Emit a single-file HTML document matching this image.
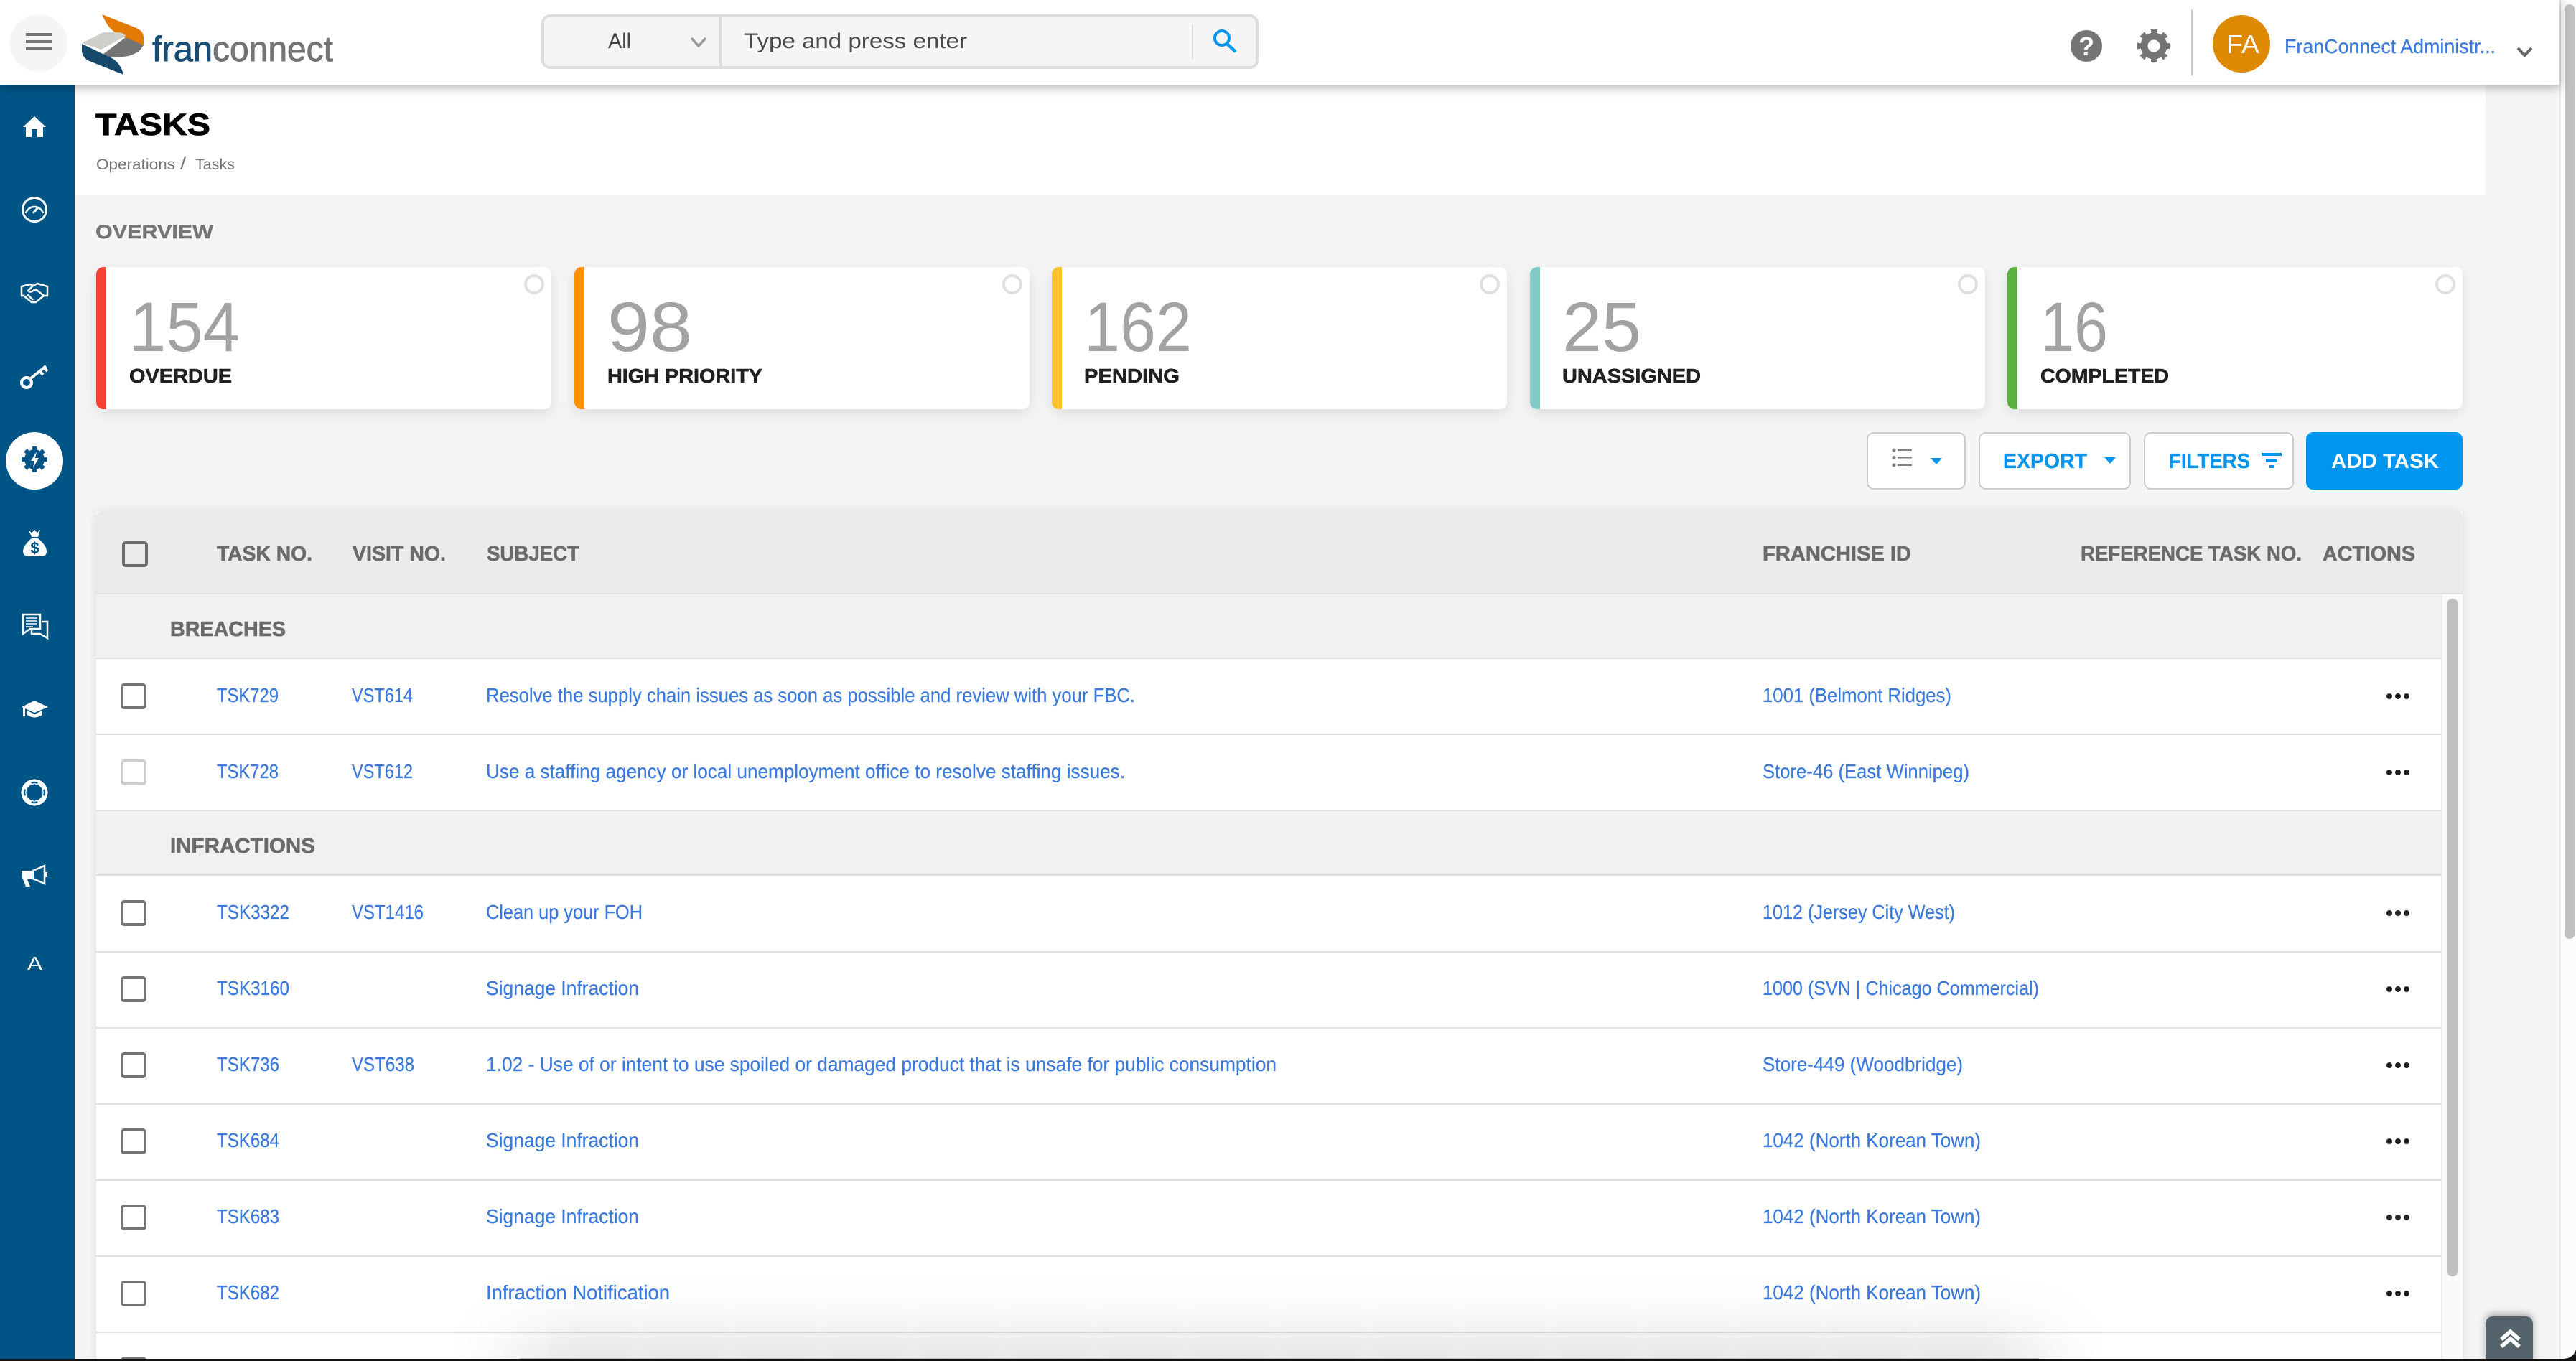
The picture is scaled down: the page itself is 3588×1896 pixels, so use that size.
<!DOCTYPE html>
<html lang="en">
<head>
<meta charset="utf-8">
<title>Tasks - FranConnect</title>
<style>
html,body{margin:0;padding:0;width:3588px;height:1896px;overflow:hidden;background:#f5f5f5;font-family:"Liberation Sans",sans-serif}
#page{position:relative;width:3588px;height:1896px;overflow:hidden;background:#f5f5f5}
.b{position:absolute;box-sizing:border-box}
svg{position:absolute;left:0;top:0}
text{font-family:"Liberation Sans",sans-serif}
.h{font-weight:700;font-size:29px;fill:#6b6b6b;stroke:#6b6b6b;stroke-width:.6px}
.l{font-size:27.500px;fill:#3b7adc;stroke:#3b7adc;stroke-width:.25px}
.n{font-size:97px;fill:#a2a2a2}
.c{font-weight:700;font-size:28px;fill:#212121;stroke:#212121;stroke-width:.6px}
.t{font-weight:700;font-size:29px;fill:#0096f0;stroke:#0096f0;stroke-width:.3px}
.card{top:372px;width:634px;height:198px;background:#fff;border-radius:10px;box-shadow:0 6px 20px rgba(0,0,0,.1);overflow:hidden}
.card i{position:absolute;left:0;top:0;bottom:0;width:14px}
.card u{position:absolute;right:10px;top:10px;width:28px;height:28px;box-sizing:border-box;border:4px solid #e0e0e0;border-radius:50%}
.btn{top:602px;height:80px;background:#fff;border:2px solid #ccc;border-radius:10px}
.line{left:134px;width:3266px;height:2px;background:#e0e0e0}
.sec{left:134px;width:3266px;height:88px;background:#f1f1f1}
</style>
</head>
<body>
<div id="page">
<!-- title band -->
<div class="b" style="left:104px;top:118px;width:3358px;height:154px;background:#fff"></div>

<!-- cards -->
<div class="b card" style="left:134px"><i style="background:#f44336"></i><u></u></div>
<div class="b card" style="left:800px"><i style="background:#ff9100"></i><u></u></div>
<div class="b card" style="left:1465px"><i style="background:#fbc02d"></i><u></u></div>
<div class="b card" style="left:2131px"><i style="background:#80cbc4"></i><u></u></div>
<div class="b card" style="left:2796px"><i style="background:#5cb03f"></i><u></u></div>

<!-- toolbar buttons -->
<div class="b btn" style="left:2600px;width:138px"></div>
<div class="b btn" style="left:2756px;width:212px"></div>
<div class="b btn" style="left:2986px;width:209px"></div>
<div class="b btn" style="left:3212px;width:218px;background:#0096f0;border-color:#0096f0"></div>

<!-- table -->
<div class="b" style="left:134px;top:713px;width:3296px;height:1183px;background:#fff;box-shadow:0 0 14px rgba(0,0,0,.1)"></div>
<div class="b" style="left:134px;top:713px;width:3296px;height:113px;background:#ebebeb;border-radius:6px 6px 0 0"></div>
<div class="b" style="left:134px;top:826px;width:3296px;height:2px;background:#e0e0e0"></div>
<div class="b sec" style="top:828px"></div>
<div class="b line" style="top:916px"></div>
<div class="b line" style="top:1022px"></div>
<div class="b line" style="top:1128px"></div>
<div class="b sec" style="top:1130px"></div>
<div class="b line" style="top:1218px"></div>
<div class="b line" style="top:1325px"></div>
<div class="b line" style="top:1431px"></div>
<div class="b line" style="top:1537px"></div>
<div class="b line" style="top:1643px"></div>
<div class="b line" style="top:1749px"></div>
<div class="b line" style="top:1855px"></div>
<div class="b" style="left:3400px;top:828px;width:28px;height:1068px;background:#fafafa;border-left:2px solid #eee"></div>
<div class="b" style="left:3408px;top:834px;width:16px;height:944px;background:#c0c0c0;border-radius:8px"></div>

<!-- page scrollbar -->
<div class="b" style="left:3565px;top:0;width:23px;height:1896px;background:#fbfbfb;border-left:2px solid #e8e8e8"></div>
<div class="b" style="left:3572px;top:6px;width:14px;height:1302px;background:#c0c0c0;border-radius:7px"></div>

<!-- sidebar -->
<div class="b" style="left:0;top:118px;width:104px;height:1778px;background:#005587"></div>
<div class="b" style="left:8px;top:602px;width:80px;height:80px;background:#fff;border-radius:50%"></div>

<!-- header -->
<div class="b" style="left:0;top:0;width:3565px;height:118px;background:#fff;box-shadow:0 4px 14px rgba(0,0,0,.3)"></div>
<div class="b" style="left:14px;top:20px;width:80px;height:80px;background:#f5f5f5;border-radius:50%"></div>
<div class="b" style="left:754px;top:20px;width:999px;height:76px;background:#f5f5f5;border:4px solid #ddd;border-radius:12px"></div>
<div class="b" style="left:1002px;top:24px;width:4px;height:68px;background:#ddd"></div>
<div class="b" style="left:1660px;top:34px;width:2px;height:48px;background:#ddd"></div>
<div class="b" style="left:3082px;top:21px;width:80px;height:80px;background:#dd8a00;border-radius:50%"></div>
<div class="b" style="left:3052px;top:13px;width:2px;height:92px;background:#ccc"></div>

<svg width="3588" height="1896" viewBox="0 0 3588 1896" xmlns="http://www.w3.org/2000/svg">
<!-- hamburger -->
<g fill="#757575"><rect x="36" y="46" width="36" height="4"/><rect x="36" y="56" width="36" height="4"/><rect x="36" y="66" width="36" height="4"/></g>

<!-- logo -->
<path d="M142 20 L190 39 L195 42 Q200 46 200 52 V63 L171 51 Q155 44 148 32 Z" fill="#e27900"/>
<path d="M114 60 L140 47 Q143 45 147 45 H164 Q172 45 175 50 L141 69 Z" fill="#cfcfcb"/>
<path d="M175 52 L200 63 L194 71 Q182 79 170 79 H152 Q146 79 144 75 Z" fill="#757575"/>
<path d="M114 61 L143 75 L156 81 Q168 88 172 104 L122 84 Q114 78 114 70 Z" fill="#15496b"/>
<text x="212" y="85" font-size="49" fill="#1a4d73" stroke="#1a4d73" stroke-width=".9" textLength="84" lengthAdjust="spacingAndGlyphs">fran</text>
<text x="296" y="85" font-size="49" fill="#757575" stroke="#757575" stroke-width=".9" textLength="168" lengthAdjust="spacingAndGlyphs">connect</text>

<!-- search -->
<text x="847" y="67" font-size="30" fill="#444" textLength="32" lengthAdjust="spacingAndGlyphs">All</text>
<path d="M963 53 L973 64 L983 53" fill="none" stroke="#999" stroke-width="3.5"/>
<text x="1036" y="67" font-size="30" fill="#4a4a4a" textLength="311" lengthAdjust="spacingAndGlyphs">Type and press enter</text>
<circle cx="1702" cy="53" r="10" fill="none" stroke="#0096f0" stroke-width="4"/>
<path d="M1709 61 L1721 72" stroke="#0096f0" stroke-width="4.500" fill="none"/>

<!-- help -->
<circle cx="2906" cy="64" r="22" fill="#757575"/>
<text x="2906" y="77" font-size="36" font-weight="700" fill="#fff" text-anchor="middle">?</text>
<!-- header gear -->
<circle cx="3000" cy="64" r="13.500" fill="none" stroke="#757575" stroke-width="10"/>
<circle cx="3000" cy="64" r="20" fill="none" stroke="#757575" stroke-width="6.500" stroke-dasharray="7.85 7.85" stroke-dashoffset="3.93"/>

<text x="3101" y="74" font-size="36" fill="#fff" textLength="46" lengthAdjust="spacingAndGlyphs">FA</text>
<text x="3182" y="74" class="l" textLength="294" lengthAdjust="spacingAndGlyphs">FranConnect Administr...</text>
<path d="M3507 67 L3516.500 77 L3526 67" fill="none" stroke="#666" stroke-width="4"/>

<!-- sidebar icons -->
<path d="M48 162 L64 177 H60 V191 H52 V180 H44 V191 H36 V177 H32 Z" fill="#fff"/>
<g fill="none" stroke="#fff" stroke-width="3">
<circle cx="48" cy="292" r="16.500"/>
<path d="M36 297 A12.500 12.500 0 0 1 60 297" stroke-width="2.500"/>
<path d="M46 297 L53 289"/>
</g>
<g fill="none" stroke="#fff" stroke-width="2.500" stroke-linejoin="round">
<path d="M30 399 L42 396 L46 398 L52 395 L66 399 V412 H61 L50 421 H44 L33 412 H30 Z"/>
<path d="M46 398 L39 405 Q42 408 46 405 L50 403 L61 412"/>
<path d="M38 410 L46 418"/>
</g>
<g fill="none" stroke="#fff" stroke-width="4">
<circle cx="37" cy="533" r="7"/>
<path d="M43 527 L64 510"/>
<path d="M55 517 L60 522 M61 512 L66 517"/>
</g>
<circle cx="48" cy="640" r="14" fill="#005587"/>
<circle cx="48" cy="640" r="15.500" fill="none" stroke="#005587" stroke-width="5" stroke-dasharray="6.09 6.09" stroke-dashoffset="3.04"/>
<path d="M51 629 L43 642 H48 L46 652 L54 638 H49 Z" fill="#fff"/>
<path d="M44 750 Q32 760 32 768 Q32 775 40 775 H57 Q65 775 65 768 Q65 760 53 750 Z" fill="#fff"/>
<path d="M40 739 L44 742 L48 739 L52 742 L56 738 L53 748 H44 Z" fill="#fff"/>
<text x="48.500" y="771" font-size="22" font-weight="700" fill="#005587" text-anchor="middle">$</text>
<g fill="none" stroke="#fff" stroke-width="2.500">
<path d="M32 856 H56 V876 H42 L32 883 Z"/>
<path d="M58 866 H66 V889 L56 883 H44 V878"/>
<path d="M36 861 H52 M36 865 H52 M36 869 H52 M36 873 H46" stroke-width="1.600"/>
</g>
<path d="M30 985 L48 976 L67 985 L48 993 Z" fill="#fff"/>
<path d="M38 990 L48 995 L59 990 V996 Q48 1003 38 996 Z" fill="#fff"/>
<path d="M33.500 986 V998" stroke="#fff" stroke-width="3"/>
<circle cx="48" cy="1104" r="15" fill="none" stroke="#fff" stroke-width="7"/>
<circle cx="48" cy="1104" r="14" fill="none" stroke="#005587" stroke-width="2.500" stroke-dasharray="9 13" stroke-dashoffset="4.500"/>
<path d="M30 1213 H44 V1225 H38 L42 1235 H36 L32 1225 Q30 1222 30 1213 Z" fill="#fff"/>
<path d="M46 1213 L62 1206 V1231 L46 1224 Z" fill="none" stroke="#fff" stroke-width="2.500"/>
<rect x="63" y="1215" width="3" height="7" fill="#fff"/>
<text x="38" y="1351" font-size="26" fill="#fff" textLength="21" lengthAdjust="spacingAndGlyphs">A</text>

<!-- titles -->
<text x="133" y="188" font-size="43" font-weight="700" fill="#000" stroke="#000" stroke-width=".8" textLength="160" lengthAdjust="spacingAndGlyphs">TASKS</text>
<text x="134" y="236" font-size="21" fill="#757575" textLength="110" lengthAdjust="spacingAndGlyphs">Operations</text>
<text x="251" y="236" font-size="24" fill="#757575" textLength="8" lengthAdjust="spacingAndGlyphs">/</text>
<text x="272" y="236" font-size="21" fill="#757575" textLength="55" lengthAdjust="spacingAndGlyphs">Tasks</text>
<text x="133" y="332" font-size="27" font-weight="700" fill="#757575" stroke="#757575" stroke-width=".4" textLength="164" lengthAdjust="spacingAndGlyphs">OVERVIEW</text>

<!-- card text -->
<text class="n" x="180" y="489" textLength="154" lengthAdjust="spacingAndGlyphs">154</text>
<text class="c" x="180" y="533" textLength="143" lengthAdjust="spacingAndGlyphs">OVERDUE</text>
<text class="n" x="846" y="489" textLength="118" lengthAdjust="spacingAndGlyphs">98</text>
<text class="c" x="846" y="533" textLength="216" lengthAdjust="spacingAndGlyphs">HIGH PRIORITY</text>
<text class="n" x="1510" y="489" textLength="150" lengthAdjust="spacingAndGlyphs">162</text>
<text class="c" x="1510" y="533" textLength="133" lengthAdjust="spacingAndGlyphs">PENDING</text>
<text class="n" x="2176" y="489" textLength="110" lengthAdjust="spacingAndGlyphs">25</text>
<text class="c" x="2176" y="533" textLength="193" lengthAdjust="spacingAndGlyphs">UNASSIGNED</text>
<text class="n" x="2842" y="489" textLength="94" lengthAdjust="spacingAndGlyphs">16</text>
<text class="c" x="2842" y="533" textLength="179" lengthAdjust="spacingAndGlyphs">COMPLETED</text>

<!-- toolbar -->
<g fill="#808080"><circle cx="2638" cy="627" r="2.500"/><circle cx="2638" cy="637.500" r="2.500"/><circle cx="2638" cy="648" r="2.500"/>
<rect x="2643" y="626" width="20" height="2"/><rect x="2643" y="636.500" width="20" height="2"/><rect x="2643" y="647" width="20" height="2"/></g>
<path d="M2689 638 H2705 L2697 647 Z" fill="#0096f0"/>
<text class="t" x="2790" y="652" textLength="117" lengthAdjust="spacingAndGlyphs">EXPORT</text>
<path d="M2931 637 H2947 L2939 646 Z" fill="#0096f0"/>
<text class="t" x="3021" y="652" textLength="113" lengthAdjust="spacingAndGlyphs">FILTERS</text>
<g fill="#0096f0"><rect x="3150" y="631" width="28" height="4"/><rect x="3156" y="640" width="16" height="4"/><rect x="3161" y="648" width="6" height="4"/></g>
<text x="3247" y="652" font-size="29" font-weight="700" fill="#fff" textLength="150" lengthAdjust="spacingAndGlyphs">ADD TASK</text>

<!-- table head -->
<rect x="172" y="756" width="32" height="32" rx="3" fill="none" stroke="#6b6b6b" stroke-width="4"/>
<text class="h" x="302" y="781" textLength="133" lengthAdjust="spacingAndGlyphs">TASK NO.</text>
<text class="h" x="491" y="781" textLength="130" lengthAdjust="spacingAndGlyphs">VISIT NO.</text>
<text class="h" x="678" y="781" textLength="129" lengthAdjust="spacingAndGlyphs">SUBJECT</text>
<text class="h" x="2455" y="781" textLength="207" lengthAdjust="spacingAndGlyphs">FRANCHISE ID</text>
<text class="h" x="2898" y="781" textLength="308" lengthAdjust="spacingAndGlyphs">REFERENCE TASK NO.</text>
<text class="h" x="3235" y="781" textLength="129" lengthAdjust="spacingAndGlyphs">ACTIONS</text>

<!-- sections -->
<text class="h" x="237" y="886" textLength="161" lengthAdjust="spacingAndGlyphs">BREACHES</text>
<text class="h" x="237" y="1188" textLength="202" lengthAdjust="spacingAndGlyphs">INFRACTIONS</text>

<!-- checkboxes -->
<g fill="none" stroke="#757575" stroke-width="4">
<rect x="170" y="954" width="32" height="32" rx="3"/>
<rect x="170" y="1060" width="32" height="32" rx="3" stroke="#ccc"/>
<rect x="170" y="1256" width="32" height="32" rx="3"/>
<rect x="170" y="1362" width="32" height="32" rx="3"/>
<rect x="170" y="1468" width="32" height="32" rx="3"/>
<rect x="170" y="1574" width="32" height="32" rx="3"/>
<rect x="170" y="1680" width="32" height="32" rx="3"/>
<rect x="170" y="1786" width="32" height="32" rx="3"/>
<rect x="170" y="1892" width="32" height="32" rx="3"/>
</g>

<!-- rows -->
<text class="l" x="302" y="978" textLength="86" lengthAdjust="spacingAndGlyphs">TSK729</text>
<text class="l" x="490" y="978" textLength="85" lengthAdjust="spacingAndGlyphs">VST614</text>
<text class="l" x="677" y="978" textLength="904" lengthAdjust="spacingAndGlyphs">Resolve the supply chain issues as soon as possible and review with your FBC.</text>
<text class="l" x="2455" y="978" textLength="263" lengthAdjust="spacingAndGlyphs">1001 (Belmont Ridges)</text>

<text class="l" x="302" y="1084" textLength="86" lengthAdjust="spacingAndGlyphs">TSK728</text>
<text class="l" x="490" y="1084" textLength="85" lengthAdjust="spacingAndGlyphs">VST612</text>
<text class="l" x="677" y="1084" textLength="890" lengthAdjust="spacingAndGlyphs">Use a staffing agency or local unemployment office to resolve staffing issues.</text>
<text class="l" x="2455" y="1084" textLength="288" lengthAdjust="spacingAndGlyphs">Store-46 (East Winnipeg)</text>

<text class="l" x="302" y="1280" textLength="101" lengthAdjust="spacingAndGlyphs">TSK3322</text>
<text class="l" x="490" y="1280" textLength="100" lengthAdjust="spacingAndGlyphs">VST1416</text>
<text class="l" x="677" y="1280" textLength="218" lengthAdjust="spacingAndGlyphs">Clean up your FOH</text>
<text class="l" x="2455" y="1280" textLength="268" lengthAdjust="spacingAndGlyphs">1012 (Jersey City West)</text>

<text class="l" x="302" y="1386" textLength="101" lengthAdjust="spacingAndGlyphs">TSK3160</text>
<text class="l" x="677" y="1386" textLength="213" lengthAdjust="spacingAndGlyphs">Signage Infraction</text>
<text class="l" x="2455" y="1386" textLength="385" lengthAdjust="spacingAndGlyphs">1000 (SVN | Chicago Commercial)</text>

<text class="l" x="302" y="1492" textLength="87" lengthAdjust="spacingAndGlyphs">TSK736</text>
<text class="l" x="490" y="1492" textLength="87" lengthAdjust="spacingAndGlyphs">VST638</text>
<text class="l" x="677" y="1492" textLength="1101" lengthAdjust="spacingAndGlyphs">1.02 - Use of or intent to use spoiled or damaged product that is unsafe for public consumption</text>
<text class="l" x="2455" y="1492" textLength="279" lengthAdjust="spacingAndGlyphs">Store-449 (Woodbridge)</text>

<text class="l" x="302" y="1598" textLength="87" lengthAdjust="spacingAndGlyphs">TSK684</text>
<text class="l" x="677" y="1598" textLength="213" lengthAdjust="spacingAndGlyphs">Signage Infraction</text>
<text class="l" x="2455" y="1598" textLength="304" lengthAdjust="spacingAndGlyphs">1042 (North Korean Town)</text>

<text class="l" x="302" y="1704" textLength="87" lengthAdjust="spacingAndGlyphs">TSK683</text>
<text class="l" x="677" y="1704" textLength="213" lengthAdjust="spacingAndGlyphs">Signage Infraction</text>
<text class="l" x="2455" y="1704" textLength="304" lengthAdjust="spacingAndGlyphs">1042 (North Korean Town)</text>

<text class="l" x="302" y="1810" textLength="87" lengthAdjust="spacingAndGlyphs">TSK682</text>
<text class="l" x="677" y="1810" textLength="256" lengthAdjust="spacingAndGlyphs">Infraction Notification</text>
<text class="l" x="2455" y="1810" textLength="304" lengthAdjust="spacingAndGlyphs">1042 (North Korean Town)</text>

<!-- action dots -->
<g fill="#212121">
<circle cx="3328" cy="970" r="4"/><circle cx="3340" cy="970" r="4"/><circle cx="3352" cy="970" r="4"/>
<circle cx="3328" cy="1076" r="4"/><circle cx="3340" cy="1076" r="4"/><circle cx="3352" cy="1076" r="4"/>
<circle cx="3328" cy="1272" r="4"/><circle cx="3340" cy="1272" r="4"/><circle cx="3352" cy="1272" r="4"/>
<circle cx="3328" cy="1378" r="4"/><circle cx="3340" cy="1378" r="4"/><circle cx="3352" cy="1378" r="4"/>
<circle cx="3328" cy="1484" r="4"/><circle cx="3340" cy="1484" r="4"/><circle cx="3352" cy="1484" r="4"/>
<circle cx="3328" cy="1590" r="4"/><circle cx="3340" cy="1590" r="4"/><circle cx="3352" cy="1590" r="4"/>
<circle cx="3328" cy="1696" r="4"/><circle cx="3340" cy="1696" r="4"/><circle cx="3352" cy="1696" r="4"/>
<circle cx="3328" cy="1802" r="4"/><circle cx="3340" cy="1802" r="4"/><circle cx="3352" cy="1802" r="4"/>
</g>
</svg>

<!-- scroll to top -->
<div class="b" style="left:3462px;top:1834px;width:66px;height:70px;background:#53626b;border-radius:10px;box-shadow:0 -4px 10px rgba(0,0,0,.3)"></div>
<svg width="3588" height="1896" viewBox="0 0 3588 1896" xmlns="http://www.w3.org/2000/svg">
<path d="M3484 1866 L3496.500 1855 L3509 1866 M3484 1876 L3496.500 1865 L3509 1876" fill="none" stroke="#fff" stroke-width="5.500"/>
</svg>

<!-- window shadow at bottom edge -->
<div class="b" style="left:724px;top:1892px;width:2116px;height:80px;background:rgba(0,0,0,.26);box-shadow:0 0 110px rgba(0,0,0,.26)"></div>

<!-- window bottom edge -->
<div class="b" style="left:0;top:1893px;width:3588px;height:3px;background:#111"></div>
<svg width="3588" height="1896" viewBox="0 0 3588 1896" xmlns="http://www.w3.org/2000/svg">
<path d="M3588 1880 Q3584 1893 3570 1893 H3588 Z" fill="#111"/>
</svg>
</div>
</body>
</html>
